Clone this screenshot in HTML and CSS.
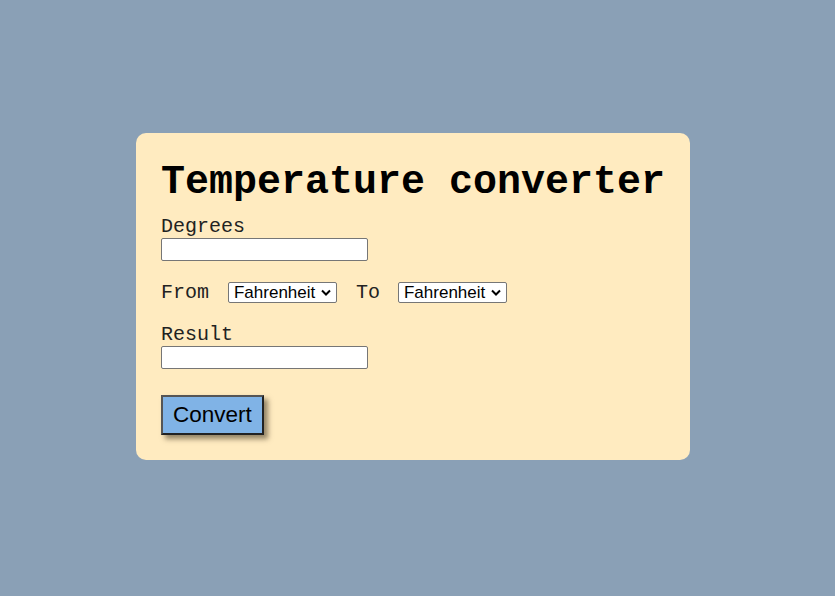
FILE: index.html
```html
<!DOCTYPE html>
<html>
<head>
<meta charset="utf-8">
<link rel="stylesheet" href="styles.css">
</head>
<body>
<main class="card">
  <h1 class="title">Temperature converter</h1>
  <label class="field-label" for="degrees">Degrees</label>
  <input class="text-input" id="degrees" type="text">
  <div class="unit-row">
    <span class="row-label">From</span>
    <select class="unit-select"><option>Fahrenheit</option><option>Celsius</option><option>Kelvin</option></select>
    <span class="row-label">To</span>
    <select class="unit-select to-select"><option>Fahrenheit</option><option>Celsius</option><option>Kelvin</option></select>
  </div>
  <label class="field-label" for="result">Result</label>
  <input class="text-input" id="result" type="text">
  <div class="actions">
    <button class="convert-btn" type="button">Convert</button>
  </div>
</main>
</body>
</html>
```
FILE: styles.css
```css
html, body {
  margin: 0;
  height: 100%;
}
body {
  background: #8aa0b6;
  display: flex;
  align-items: center;
  justify-content: center;
  padding-right: 9px;
  padding-bottom: 3px;
  box-sizing: border-box;
  font-family: "Liberation Mono", "Courier New", monospace;
  color: #000;
}
.card {
  background: #ffebc0;
  border-radius: 10px;
  padding: 27px 25px 25px 25px;
  display: flex;
  flex-direction: column;
  align-items: flex-start;
}
.title {
  margin: 0 0 10px 0;
  font-size: 40px;
  font-weight: bold;
  line-height: 45px;
}
.field-label {
  font-size: 20px;
  line-height: 23px;
  display: block;
  color: #222;
}
.text-input {
  box-sizing: border-box;
  width: 207px;
  height: 23px;
  margin: 0;
  border: 1px solid #767676;
  border-radius: 2px;
  background: #fff;
  font-family: "Liberation Sans", Arial, sans-serif;
  font-size: 14px;
}
.unit-row {
  display: flex;
  align-items: center;
  gap: 19px;
  margin: 20px 0 19px 0;
  height: 23px;
}
.row-label {
  font-size: 20px;
  line-height: 23px;
  color: #222;
}
.to-select {
  margin-left: -1px !important;
}
.unit-select {
  box-sizing: border-box;
  width: 109px;
  height: 21px;
  margin: 0;
  padding: 0 0 0 5px;
  font-family: "Liberation Sans", Arial, sans-serif;
  font-size: 17px;
  line-height: 19px;
  color: #000;
  border: 1px solid #767676;
  border-radius: 2px;
  appearance: none;
  -webkit-appearance: none;
  background: #fff url("data:image/svg+xml,%3Csvg xmlns='http://www.w3.org/2000/svg' width='10' height='7' viewBox='0 0 10 7'%3E%3Cpath d='M1 1.5 L5 5.5 L9 1.5' fill='none' stroke='%23000' stroke-width='2'/%3E%3C/svg%3E") no-repeat right 5px center;
}
.actions {
  margin-top: 26px;
}
.convert-btn {
  box-sizing: border-box;
  width: 103px;
  height: 40px;
  margin: 0;
  padding: 0 10px;
  background: #80b3e6;
  border: 2px solid #222;
  border-top-color: #555;
  border-left-color: #555;
  box-shadow: 4px 4px 5px rgba(60, 50, 30, 0.55);
  font-family: "Liberation Sans", Arial, sans-serif;
  font-size: 22.5px;
  color: #000;
  text-align: left;
}
```
